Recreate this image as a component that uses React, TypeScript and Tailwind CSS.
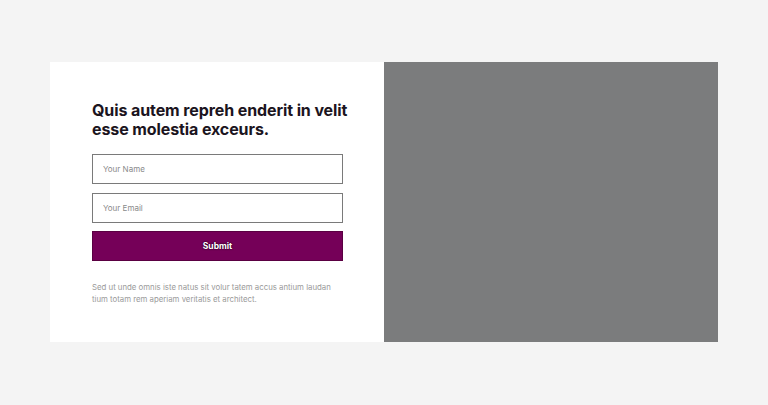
export default function App() {
  return (
    <div className="h-[405px] w-full bg-[#f4f4f4] pt-[62px]" style={{ fontFamily: "Inter, 'Noto Sans', sans-serif" }}>
      <div className="mx-auto flex h-[280px] w-[668px]">
        <div className="w-[334px] bg-white pl-[42px] pr-[41px] pt-[39px]">
          <h2 className="w-[264px] text-[16px] font-bold leading-[19px] tracking-[-0.1px] text-[#1b1420]">
            Quis autem repreh enderit in velit esse molestia exceurs.
          </h2>
          <form className="mt-[15px] flex flex-col gap-[8.5px]" onSubmit={(e) => e.preventDefault()}>
            <input
              type="text"
              placeholder="Your Name"
              className="h-[30px] w-full border border-[#7a7a7a] bg-white px-[10px] text-[8px] text-[#333] placeholder:text-[#8a8a8a] focus:outline-none"
            />
            <input
              type="email"
              placeholder="Your Email"
              className="h-[30px] w-full border border-[#7a7a7a] bg-white px-[10px] text-[8px] text-[#333] placeholder:text-[#8a8a8a] focus:outline-none"
            />
            <button
              type="submit"
              className="h-[30px] w-full border border-[#5a0042] bg-[#750058] text-[8.5px] font-bold text-white [text-shadow:0_0_2px_#000]"
            >
              Submit
            </button>
          </form>
          <p className="mt-[20px] w-[245px] text-[7.8px] leading-[12px] text-[#9a9a9a]">
            Sed ut unde omnis iste natus sit volur tatem accus antium laudan tium totam rem aperiam veritatis et architect.
          </p>
        </div>
        <div className="w-[334px] bg-[#7b7c7d]" />
      </div>
    </div>
  )
}
